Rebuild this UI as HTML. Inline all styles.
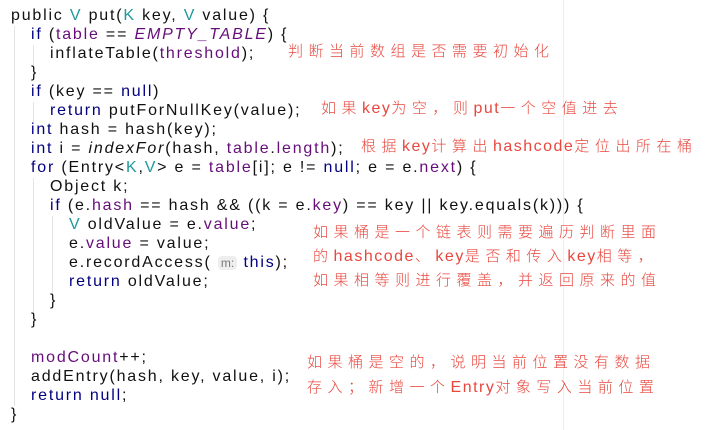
<!DOCTYPE html>
<html><head><meta charset="utf-8"><style>
body{margin:0;width:706px;height:430px;background:#fff;overflow:hidden;position:relative;font-family:"Liberation Sans","DejaVu Sans",sans-serif}
.c{position:absolute;left:11px;top:6px;font-size:16px;letter-spacing:1.8px;color:#111;line-height:19px}
.c div{height:19px;white-space:pre}
.l1{padding-left:20px}.l2{padding-left:39px}.l3{padding-left:58px}
.k{color:#000080}.f{color:#660e7a}.t{color:#20999d}.i{font-style:italic}
.a{position:absolute;color:#e8473e;font-family:"Liberation Sans","Noto Sans CJK SC",sans-serif;font-size:15px;letter-spacing:5.5px;white-space:nowrap;font-weight:300}
.l{letter-spacing:1.5px;font-size:16px}
.g{position:absolute;width:1px;background:#e4e4e4}
.hint{background:#eee;color:#777;border-radius:4px;font-size:12px;padding:0 3px;letter-spacing:0}
</style></head><body>
<div class="g" style="left:563px;top:0;height:430px;background:#ececec"></div>
<div class="g" style="left:14px;top:26px;height:380px"></div>
<div class="g" style="left:33px;top:45px;height:20px"></div>
<div class="g" style="left:33px;top:102px;height:20px"></div>
<div class="g" style="left:33px;top:178px;height:140px"></div>
<div class="g" style="left:52px;top:216px;height:80px"></div>
<div class="c">
<div>public <span class="t">V</span> put(<span class="t">K</span> key, <span class="t">V</span> value) {</div>
<div class="l1"><span class="k">if</span> (<span class="f">table</span> == <span class="f i">EMPTY_TABLE</span>) {</div>
<div class="l2">inflateTable(<span class="f">threshold</span>);</div>
<div class="l1">}</div>
<div class="l1"><span class="k">if</span> (key == <span class="k">null</span>)</div>
<div class="l2"><span class="k">return</span> putForNullKey(value);</div>
<div class="l1"><span class="k">int</span> hash = hash(key);</div>
<div class="l1"><span class="k">int</span> i = <span class="i">indexFor</span>(hash, <span class="f">table</span>.<span class="f">length</span>);</div>
<div class="l1"><span class="k">for</span> (Entry&lt;<span class="t">K</span>,<span class="t">V</span>&gt; e = <span class="f">table</span>[i]; e != <span class="k">null</span>; e = e.<span class="f">next</span>) {</div>
<div class="l2">Object k;</div>
<div class="l2"><span class="k">if</span> (e.<span class="f">hash</span> == hash &amp;&amp; ((k = e.<span class="f">key</span>) == key || key.equals(k))) {</div>
<div class="l3"><span class="t">V</span> oldValue = e.<span class="f">value</span>;</div>
<div class="l3">e.<span class="f">value</span> = value;</div>
<div class="l3">e.recordAccess( <span class="hint">m:</span> <span class="k">this</span>);</div>
<div class="l3"><span class="k">return</span> oldValue;</div>
<div class="l2">}</div>
<div class="l1">}</div>
<div></div>
<div class="l1"><span class="f">modCount</span>++;</div>
<div class="l1">addEntry(hash, key, value, i);</div>
<div class="l1"><span class="k">return</span> <span class="k">null</span>;</div>
<div>}</div>
</div>
<div class="a" style="left:288px;top:40px">判断当前数组是否需要初始化</div>
<div class="a" style="left:321px;top:97px">如果<span class="l">key</span>为空，则<span class="l">put</span>一个空值进去</div>
<div class="a" style="left:361px;top:135px">根据<span class="l">key</span>计算出<span class="l">hashcode</span>定位出所在桶</div>
<div class="a" style="left:313px;top:221px">如果桶是一个链表则需要遍历判断里面</div>
<div class="a" style="left:313px;top:245px">的<span class="l">hashcode</span>、<span class="l">key</span>是否和传入<span class="l">key</span>相等，</div>
<div class="a" style="left:313px;top:269px">如果相等则进行覆盖，并返回原来的值</div>
<div class="a" style="left:307px;top:351px">如果桶是空的，说明当前位置没有数据</div>
<div class="a" style="left:307px;top:376px">存入；新增一个<span class="l">Entry</span>对象写入当前位置</div>
</body></html>
